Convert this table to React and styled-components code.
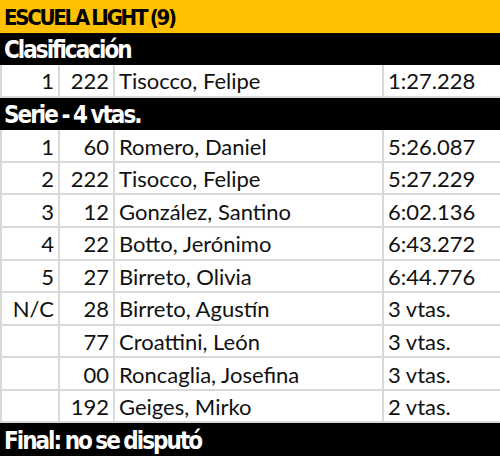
import React from "react";
import styled, { createGlobalStyle } from "styled-components";

const Global = createGlobalStyle`
  html, body { margin: 0; padding: 0; background: #fff; }
  #root { width: 500px; }
`;

const Sheet = styled.div`
  width: 500px;
  height: 456px;
  display: grid;
  grid-template-rows: repeat(14, 1fr);
  overflow: hidden;
`;

const Banner = styled.div`
  background: ${(p) => (p.$gold ? "#ffc000" : "#000")};
  color: ${(p) => (p.$gold ? "#000" : "#fff")};
  display: flex;
  align-items: center;
  padding: 3px 0 0 4px;
  font-family: "DejaVu Sans Condensed", "DejaVu Sans", sans-serif;
  font-weight: 700;
  font-size: ${(p) => (p.$gold ? "22px" : "24px")};
  letter-spacing: ${(p) => (p.$gold ? "-2.3px" : "-2px")};
  word-spacing: -1px;
  white-space: nowrap;
  line-height: 1;
`;

const Row = styled.div`
  display: grid;
  grid-template-columns: 58px 55px 269px 1fr;
  border-bottom: 2px solid #d9d9d9;
  border-left: 2px solid #d9d9d9;
  box-sizing: border-box;
  font-family: Lato, "Liberation Sans", sans-serif;
  font-size: 22px;
  color: #111;
`;

const Cell = styled.div`
  display: flex;
  align-items: center;
  justify-content: ${(p) => (p.$right ? "flex-end" : "flex-start")};
  padding: ${(p) => (p.$right ? "1px 4px 0 0" : "1px 0 0 4px")};
  border-right: ${(p) => (p.$last ? "none" : "2px solid #d9d9d9")};
  white-space: nowrap;
  box-sizing: border-box;
`;

const Result = ({ pos, num, name, time }) => (
  <Row>
    <Cell $right>{pos}</Cell>
    <Cell $right>{num}</Cell>
    <Cell>{name}</Cell>
    <Cell $last>{time}</Cell>
  </Row>
);

const serie = [
  ["1", "60", "Romero, Daniel", "5:26.087"],
  ["2", "222", "Tisocco, Felipe", "5:27.229"],
  ["3", "12", "González, Santino", "6:02.136"],
  ["4", "22", "Botto, Jerónimo", "6:43.272"],
  ["5", "27", "Birreto, Olivia", "6:44.776"],
  ["N/C", "28", "Birreto, Agustín", "3 vtas."],
  ["", "77", "Croattini, León", "3 vtas."],
  ["", "00", "Roncaglia, Josefina", "3 vtas."],
  ["", "192", "Geiges, Mirko", "2 vtas."],
];

export default function App() {
  return (
    <>
      <Global />
      <Sheet>
        <Banner $gold>ESCUELA LIGHT (9)</Banner>
        <Banner>Clasificación</Banner>
        <Result pos="1" num="222" name="Tisocco, Felipe" time="1:27.228" />
        <Banner>Serie - 4 vtas.</Banner>
        {serie.map((r, i) => (
          <Result key={i} pos={r[0]} num={r[1]} name={r[2]} time={r[3]} />
        ))}
        <Banner>Final: no se disputó</Banner>
      </Sheet>
    </>
  );
}
